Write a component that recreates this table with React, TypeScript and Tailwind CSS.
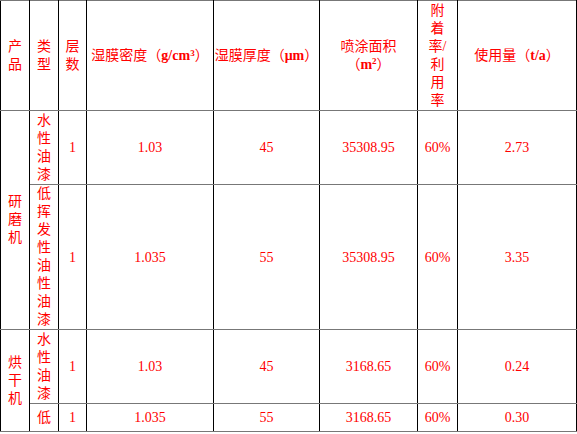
import React from "react";

const V = ({ chars }: { chars: string[] }) => (
  <div className="flex flex-col items-center">
    {chars.map((c, i) => (
      <span key={i} className="block leading-[18px]">
        {c}
      </span>
    ))}
  </div>
);

const cell =
  "border-x border-x-black border-y border-y-[#777] text-center align-middle p-0";

export default function App() {
  return (
    <div
      className="w-[577px] h-[434px] bg-white overflow-hidden text-[#ff0000] text-[14px]"
      style={{ fontFamily: '"Liberation Serif", "Noto Sans CJK SC", serif' }}
    >
      <table className="border-collapse table-fixed w-[576px]">
        <colgroup>
          <col className="w-[29px]" />
          <col className="w-[29px]" />
          <col className="w-[28px]" />
          <col className="w-[127px]" />
          <col className="w-[106px]" />
          <col className="w-[98px]" />
          <col className="w-[40px]" />
          <col className="w-[119px]" />
        </colgroup>
        <tbody>
          <tr className="h-[110px]">
            <td className={cell}>
              <V chars={["产", "品"]} />
            </td>
            <td className={cell}>
              <V chars={["类", "型"]} />
            </td>
            <td className={cell}>
              <V chars={["层", "数"]} />
            </td>
            <td className={cell}>
              湿膜密度（<b>g/cm<sup className="text-[9px]">3</sup></b>）
            </td>
            <td className={cell}>
              湿膜厚度（<b>μm</b>）
            </td>
            <td className={cell}>
              <div className="leading-[18px]">喷涂面积</div>
              <div className="leading-[18px]">
                （<b>m<sup className="text-[9px]">2</sup></b>）
              </div>
            </td>
            <td className={cell}>
              <V chars={["附", "着", "率/", "利", "用", "率"]} />
            </td>
            <td className={cell}>
              使用量（<b>t/a</b>）
            </td>
          </tr>
          <tr className="h-[74px]">
            <td className={cell} rowSpan={2}>
              <V chars={["研", "磨", "机"]} />
            </td>
            <td className={cell}>
              <V chars={["水", "性", "油", "漆"]} />
            </td>
            <td className={cell}>1</td>
            <td className={cell}>1.03</td>
            <td className={cell}>45</td>
            <td className={cell}>35308.95</td>
            <td className={cell}>60%</td>
            <td className={cell}>2.73</td>
          </tr>
          <tr className="h-[145px]">
            <td className={cell}>
              <V chars={["低", "挥", "发", "性", "油", "性", "油", "漆"]} />
            </td>
            <td className={cell}>1</td>
            <td className={cell}>1.035</td>
            <td className={cell}>55</td>
            <td className={cell}>35308.95</td>
            <td className={cell}>60%</td>
            <td className={cell}>3.35</td>
          </tr>
          <tr className="h-[74px]">
            <td className={cell} rowSpan={2}>
              <V chars={["烘", "干", "机"]} />
            </td>
            <td className={cell}>
              <V chars={["水", "性", "油", "漆"]} />
            </td>
            <td className={cell}>1</td>
            <td className={cell}>1.03</td>
            <td className={cell}>45</td>
            <td className={cell}>3168.65</td>
            <td className={cell}>60%</td>
            <td className={cell}>0.24</td>
          </tr>
          <tr className="h-[28px]">
            <td className={cell}>
              <V chars={["低"]} />
            </td>
            <td className={cell}>1</td>
            <td className={cell}>1.035</td>
            <td className={cell}>55</td>
            <td className={cell}>3168.65</td>
            <td className={cell}>60%</td>
            <td className={cell}>0.30</td>
          </tr>
        </tbody>
      </table>
    </div>
  );
}
